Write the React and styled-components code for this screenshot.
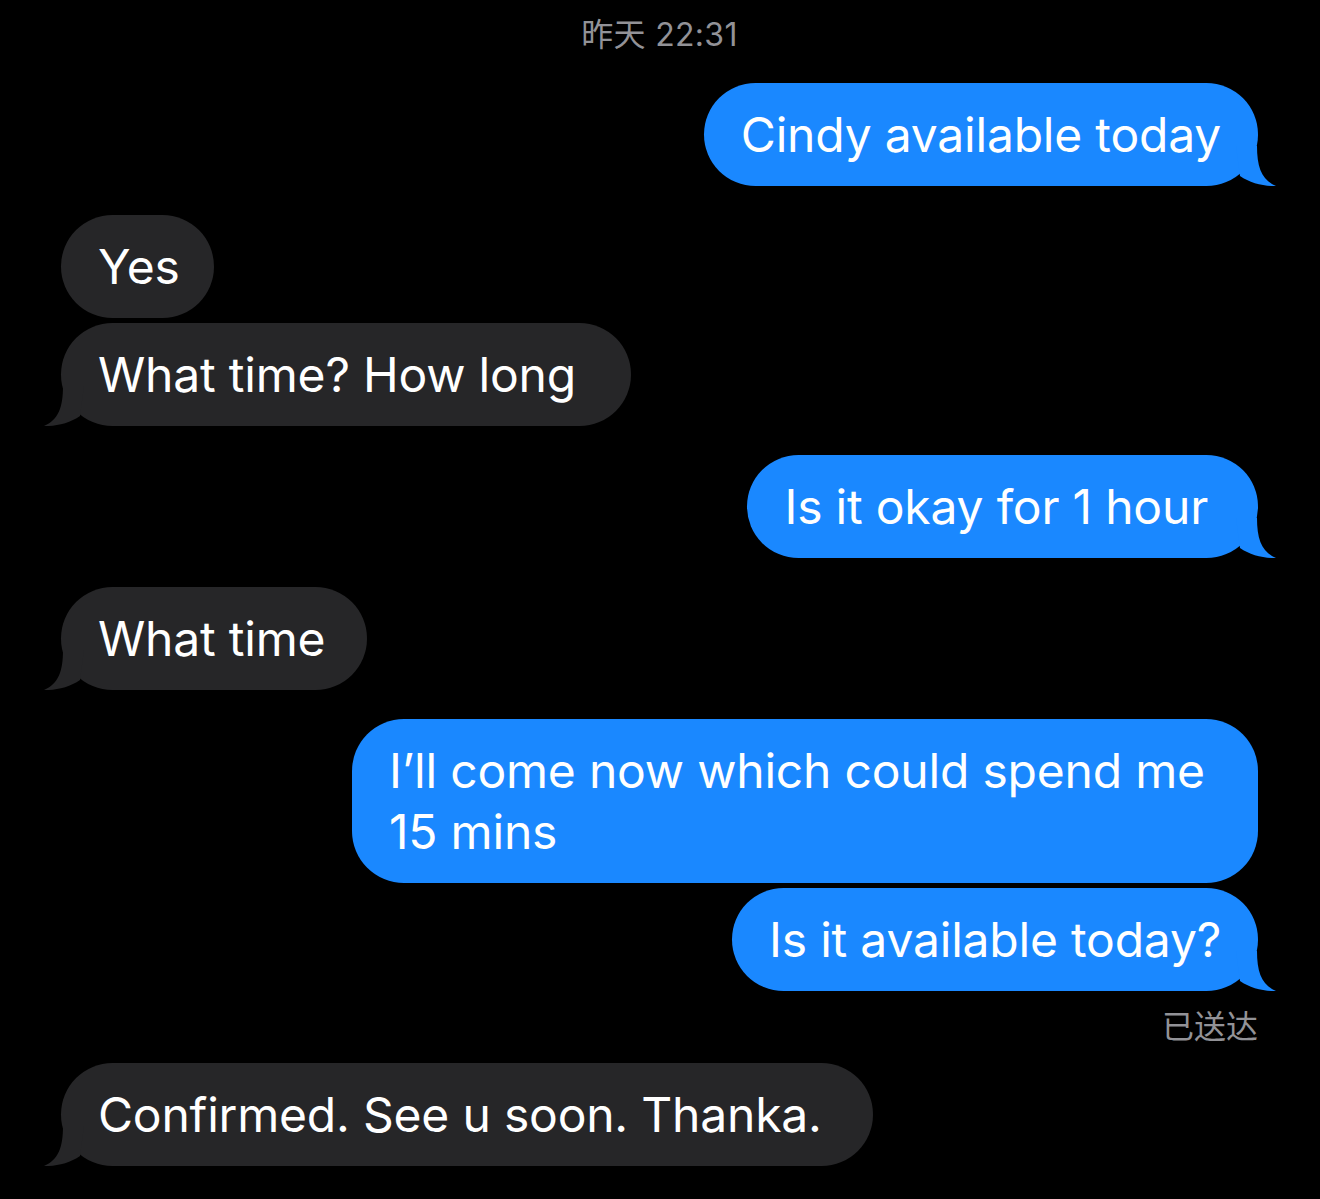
import styled, { createGlobalStyle } from "styled-components"

const GlobalStyle = createGlobalStyle`
  html, body {
    margin: 0;
    padding: 0;
    background: #000;
  }
`

const Page = styled.div`
  width: 1320px;
  min-height: 1199px;
  box-sizing: border-box;
  padding: 15px 62px 0 61px;
  background: #000;
  font-family: Inter, "Noto Sans", "Noto Sans CJK SC", sans-serif;
  overflow: hidden;
`

const Stamp = styled.div`
  height: 40px;
  text-align: center;
  color: #929297;
  font-size: 32px;
  line-height: 40px;
  font-family: Inter, "Noto Sans CJK SC", sans-serif;
  letter-spacing: 0.3px;
`

const Row = styled.div`
  display: flex;
  justify-content: ${p => (p.$sent ? "flex-end" : "flex-start")};
  margin-top: ${p => p.$gap}px;
`

const Bubble = styled.div`
  position: relative;
  box-sizing: border-box;
  max-width: 906px;
  padding: 21px ${p => 37 + (p.$extra || 0)}px 21px 37px;
  border-radius: 52px;
  color: #fff;
  font-size: 48px;
  line-height: 61px;
  letter-spacing: -0.2px;
  background: ${p => (p.$sent ? "#1a88ff" : "#262628")};
`

const TailSvg = styled.svg`
  position: absolute;
  bottom: 0;
  width: 40px;
  height: 40px;
  ${p => (p.$sent ? "right: -18px;" : "left: -17px; transform: scaleX(-1);")}
`

const Delivered = styled.div`
  height: 36px;
  margin-top: 15px;
  text-align: right;
  color: #929297;
  font-size: 32px;
  line-height: 36px;
  font-family: "Noto Sans CJK SC", sans-serif;
`

const Tail = ({ sent }) => (
  <TailSvg $sent={sent} viewBox="0 0 40 40">
    <path
      d="M0 0 H21 C21 22 26 34 40 40 C28 40.5 14 37 4 30 Z"
      fill={sent ? "#1a88ff" : "#262628"}
    />
  </TailSvg>
)

const messages = [
  { sent: true, gap: 28, tail: true, text: "Cindy available today" },
  { sent: false, gap: 29, tail: false, extra: -3, text: "Yes" },
  { sent: false, gap: 5, tail: true, extra: 18, text: "What time? How long" },
  { sent: true, gap: 29, tail: true, extra: 13, text: "Is it okay for 1 hour" },
  { sent: false, gap: 29, tail: true, extra: 5, text: "What time" },
  { sent: true, gap: 29, tail: false, text: "I\u2019ll come now which could spend me 15 mins" },
  { sent: true, gap: 5, tail: true, text: "Is it available today?" },
]

const App = () => {
  return (
    <Page>
      <GlobalStyle />
      <Stamp>昨天 22:31</Stamp>
      {messages.map((m, i) => (
        <Row key={i} $sent={m.sent} $gap={m.gap}>
          <Bubble $sent={m.sent} $extra={m.extra}>
            {m.tail && <Tail sent={m.sent} />}
            {m.text}
          </Bubble>
        </Row>
      ))}
      <Delivered>已送达</Delivered>
      <Row $gap={21}>
        <Bubble $extra={14}>
          <Tail />
          Confirmed. See u soon. Thanka.
        </Bubble>
      </Row>
    </Page>
  )
}

export default App
